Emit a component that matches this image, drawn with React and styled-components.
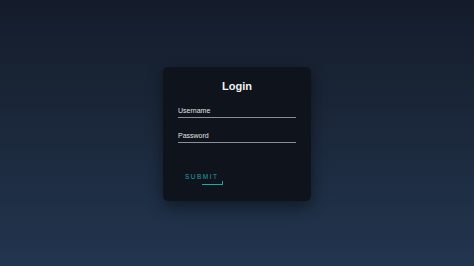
import React from 'react';
import styled, { createGlobalStyle } from 'styled-components';

const GlobalStyle = createGlobalStyle`
  html, body {
    margin: 0;
    padding: 0;
    height: 100%;
  }
  #root {
    height: 100%;
  }
`;

const Page = styled.div`
  width: 100%;
  height: 100vh;
  display: flex;
  justify-content: center;
  align-items: center;
  background: linear-gradient(to bottom, #141c2b 0%, #1a2638 40%, #22354f 100%);
  font-family: 'Liberation Sans', Arial, sans-serif;
`;

const Card = styled.form`
  width: 148px;
  box-sizing: border-box;
  padding: 13px 15px 15px;
  margin-top: 2px;
  background: #0e131c;
  border-radius: 5px;
  box-shadow: 0 6px 16px rgba(0, 0, 0, 0.45);
  display: flex;
  flex-direction: column;
`;

const Title = styled.h2`
  margin: 0 0 11px;
  font-size: 11px;
  line-height: 13px;
  font-weight: bold;
  color: #f2f2f2;
  text-align: center;
`;

const Input = styled.input`
  display: block;
  width: 100%;
  height: 14px;
  box-sizing: border-box;
  margin: 0 0 11px;
  padding: 0;
  background: transparent;
  border: none;
  border-bottom: 1px solid #8b9098;
  font-family: inherit;
  font-size: 7px;
  color: #e6e6e6;
  outline: none;

  &::placeholder {
    color: #e2e2e2;
  }
`;

const SubmitButton = styled.button`
  position: relative;
  align-self: flex-start;
  margin-top: 14px;
  padding: 5px 5px 6px 7px;
  background: transparent;
  border: none;
  font-family: inherit;
  font-size: 6.5px;
  letter-spacing: 1.5px;
  color: #2c9fae;
  cursor: pointer;
`;

const BottomEdge = styled.span`
  position: absolute;
  right: 1px;
  bottom: 1px;
  width: 21px;
  height: 1px;
  background: #1fa8a0;
`;

const RightEdge = styled.span`
  position: absolute;
  right: 1px;
  bottom: 1px;
  width: 1px;
  height: 4px;
  background: #1fa8a0;
`;

const App = () => {
  return (
    <Page>
      <GlobalStyle />
      <Card onSubmit={e => e.preventDefault()}>
        <Title>Login</Title>
        <Input type="text" placeholder="Username" />
        <Input type="password" placeholder="Password" />
        <SubmitButton type="submit">
          SUBMIT
          <BottomEdge />
          <RightEdge />
        </SubmitButton>
      </Card>
    </Page>
  );
};

export default App;
